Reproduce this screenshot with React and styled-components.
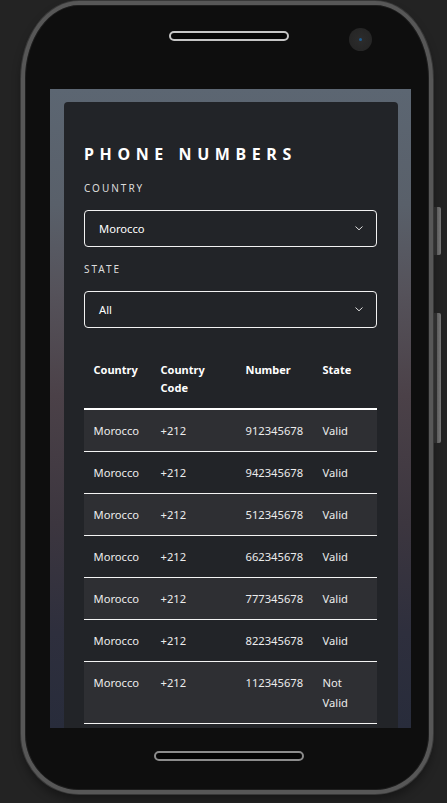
import React from "react";
import styled, { createGlobalStyle } from "styled-components";

const GlobalStyle = createGlobalStyle`
  html, body {
    margin: 0;
    padding: 0;
    background: #232323;
    overflow: hidden;
  }
  * { box-sizing: border-box; }
`;

const Stage = styled.div`
  width: 447px;
  height: 803px;
  padding: 1px 0 0 21px;
  font-family: "Noto Sans", "Open Sans", sans-serif;
`;

const Phone = styled.div`
  position: relative;
  width: 412px;
  height: 793px;
  border: 4px solid #575757;
  border-radius: 58px 58px 58px 58px / 78px 78px 60px 60px;
  background: #0e0e0e;
  box-shadow: inset 0 0 0 1px #1e1e1e, 0 0 0 1px #383838,
    0 6px 10px rgba(0, 0, 0, 0.35);
  display: flex;
  flex-direction: column;
`;

const SideButton = styled.div`
  position: absolute;
  right: -12px;
  top: ${(p) => p.$top}px;
  width: 7px;
  height: ${(p) => p.$h}px;
  border-radius: 0 2px 2px 0;
  background: linear-gradient(to right, #2e2e2e 0 3px, #5a5a5a 3px, #777 100%);
`;

const TopBar = styled.div`
  height: 84px;
  flex: none;
`;

const Speaker = styled.div`
  margin: 25.7px 0 0 144px;
  width: 120px;
  height: 10px;
  border: 2px solid #c4c4c4;
  border-radius: 6px;
  background: #050505;
`;

const Camera = styled.div`
  position: absolute;
  left: 324px;
  top: 22.6px;
  width: 23.4px;
  height: 23.4px;
  border-radius: 50%;
  background: radial-gradient(circle at 50% 50%, #2c2c2c 0%, #262626 70%, #1d1d1d 100%);
  display: flex;
  align-items: center;
  justify-content: center;

  &::after {
    content: "";
    width: 3px;
    height: 3px;
    border-radius: 50%;
    background: #1d5c92;
  }
`;

const Screen = styled.div`
  margin-left: 25px;
  width: 361px;
  height: 639px;
  flex: none;
  overflow: hidden;
  padding: 13px 13px 0 14px;
  background: linear-gradient(
    180deg,
    #5c6672 0%,
    #59606a 18%,
    #55525a 32%,
    #4b4148 48%,
    #3c363f 68%,
    #2e2f3d 85%,
    #282c3b 100%
  );
`;

const Card = styled.div`
  width: 334px;
  min-height: 700px;
  border-radius: 4px 4px 0 0;
  background: #222428;
  padding: 41px 21px 20px 20px;
  color: #fff;
`;

const Title = styled.h1`
  margin: 0 0 16px;
  font-size: 16px;
  line-height: 22px;
  font-weight: 700;
  letter-spacing: 5.6px;
  color: #fff;
`;

const Field = styled.div`
  margin-bottom: 15px;
`;

const Label = styled.div`
  font-size: 10px;
  line-height: 14px;
  letter-spacing: 2px;
  color: #dcdcdc;
  margin-bottom: 15px;
`;

const Select = styled.div`
  height: 37px;
  border: 1px solid #f2f2f2;
  border-radius: 4px;
  padding: 0 13.5px 0 14px;
  display: flex;
  align-items: center;
  justify-content: space-between;
  font-size: 11.2px;
  color: #fff;
`;

const Chevron = () => (
  <svg width="8" height="5" viewBox="0 0 8 5" fill="none">
    <polyline
      points="0.8,0.8 4,3.8 7.2,0.8"
      stroke="#e0e0e0"
      strokeWidth="1"
      strokeLinecap="round"
      strokeLinejoin="round"
    />
  </svg>
);

const Table = styled.table`
  margin-top: 23px;
  width: 293px;
  table-layout: fixed;
  border-collapse: separate;
  border-spacing: 0;
`;

const Col = styled.col`
  width: ${(p) => p.$w}px;
`;

const Th = styled.th`
  text-align: left;
  vertical-align: top;
  font-size: 11px;
  font-weight: 700;
  line-height: 18.3px;
  padding: 10px 10px 10.5px 9.5px;
  border-bottom: 2px solid #fff;
  color: #fff;
`;

const Row = styled.tr`
  background: ${(p) => (p.$odd ? "#2e2f33" : "transparent")};
`;

const Td = styled.td`
  vertical-align: top;
  font-size: 11.2px;
  line-height: 20px;
  padding: 10.5px 10px 10.5px 9.5px;
  border-bottom: 1px solid #f4f4f4;
  color: #ececec;
  white-space: ${(p) => (p.$nowrap ? "nowrap" : "normal")};
`;

const HomeButton = styled.div`
  margin: 22.7px 0 0 129px;
  width: 149.5px;
  height: 10px;
  flex: none;
  border: 2px solid #8c8c8c;
  border-radius: 6px;
  background: #050505;
`;

const rows = [
  ["912345678", "Valid"],
  ["942345678", "Valid"],
  ["512345678", "Valid"],
  ["662345678", "Valid"],
  ["777345678", "Valid"],
  ["822345678", "Valid"],
  ["112345678", "Not Valid"],
];

export default function App() {
  return (
    <>
      <GlobalStyle />
      <Stage>
        <Phone>
          <SideButton $top={202} $h={48} />
          <SideButton $top={308} $h={130} />
          <Camera />
          <TopBar>
            <Speaker />
          </TopBar>
          <Screen>
            <Card>
              <Title>PHONE NUMBERS</Title>
              <Field>
                <Label>COUNTRY</Label>
                <Select>
                  <span>Morocco</span>
                  <Chevron />
                </Select>
              </Field>
              <Field>
                <Label>STATE</Label>
                <Select>
                  <span>All</span>
                  <Chevron />
                </Select>
              </Field>
              <Table>
                <colgroup>
                  <Col $w={67} />
                  <Col $w={85} />
                  <Col $w={77} />
                  <Col $w={64} />
                </colgroup>
                <thead>
                  <tr>
                    <Th>Country</Th>
                    <Th>Country Code</Th>
                    <Th>Number</Th>
                    <Th>State</Th>
                  </tr>
                </thead>
                <tbody>
                  {rows.map(([num, state], i) => (
                    <Row key={num} $odd={i % 2 === 0}>
                      <Td $nowrap>Morocco</Td>
                      <Td $nowrap>+212</Td>
                      <Td $nowrap>{num}</Td>
                      <Td>{state}</Td>
                    </Row>
                  ))}
                </tbody>
              </Table>
            </Card>
          </Screen>
          <HomeButton />
        </Phone>
      </Stage>
    </>
  );
}
